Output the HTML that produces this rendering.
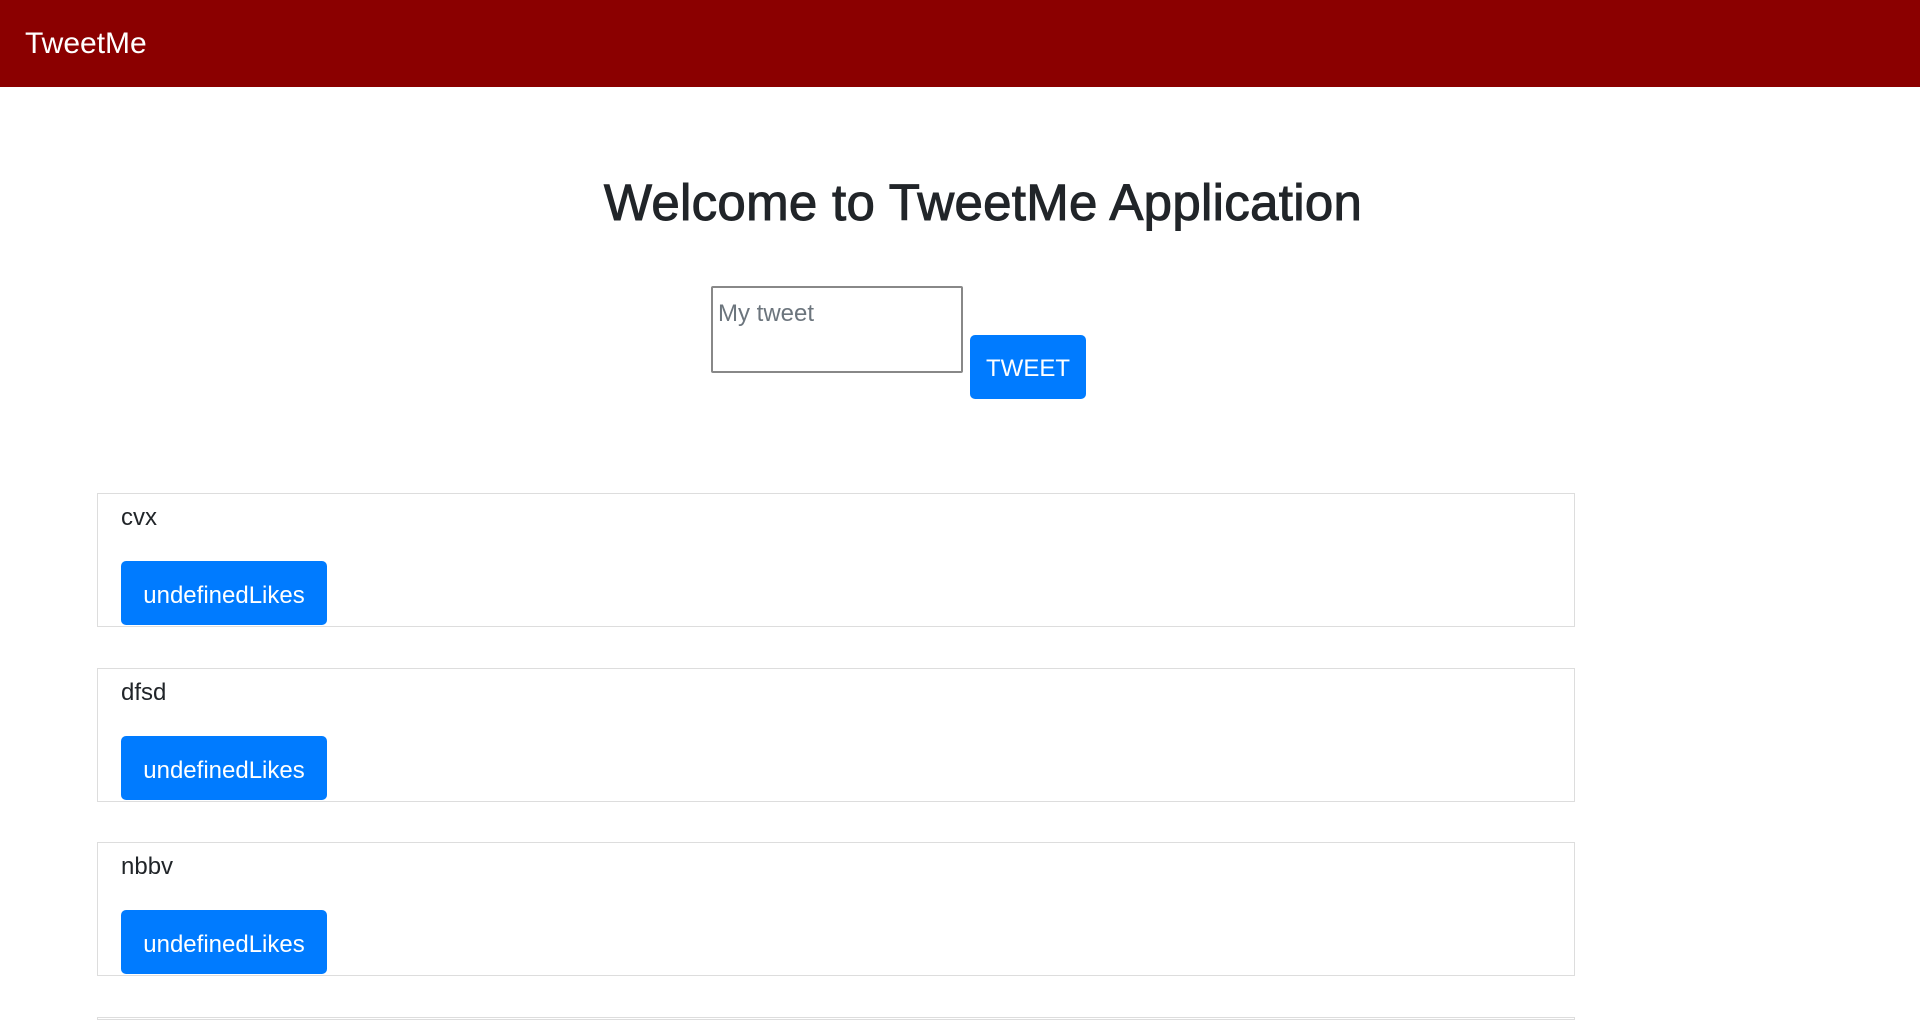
<!DOCTYPE html>
<html style="width:1920px;height:1020px;overflow:hidden"><head><meta charset="utf-8"><style>
*{box-sizing:border-box;margin:0;padding:0}
body{width:1920px;height:1020px;overflow:hidden;background:#fff;font-family:"Liberation Sans",sans-serif;color:#212529;position:relative}
.nav{position:absolute;left:0;top:0;width:1920px;height:87px;background:#8b0000}
.brand{position:absolute;left:25px;top:27px;font-size:30px;color:#fff}
h1{position:absolute;left:0;width:1966px;text-align:center;top:173px;font-size:51px;font-weight:normal;color:#212529;-webkit-text-stroke:1px #212529;letter-spacing:0.3px}
.ta{position:absolute;left:711px;top:286px;width:252px;height:87px;border:2px solid #888;border-radius:2px}
.ta span{position:absolute;left:5px;top:12px;font-size:24px;color:#6c757d}
.btn{position:absolute;background:#007bff;color:#fff;border-radius:5px;font-size:24px;text-align:center}
.card{position:absolute;left:97px;width:1478px;height:134px;border:1px solid #ddd}
.card .t{position:absolute;left:23px;top:10px;font-size:24px}
.card .btn{left:23px;top:67px;width:206px;height:64px;line-height:70px}
</style></head><body>
<div class="nav"><div class="brand">TweetMe</div></div>
<h1>Welcome to TweetMe Application</h1>
<div class="ta"><span>My tweet</span></div>
<div class="btn" style="left:970px;top:335px;width:116px;height:64px;line-height:68px">TWEET</div>
<div class="card" style="top:493px"><div class="t">cvx</div><div class="btn">undefinedLikes</div></div>
<div class="card" style="top:668px"><div class="t">dfsd</div><div class="btn">undefinedLikes</div></div>
<div class="card" style="top:842px"><div class="t">nbbv</div><div class="btn">undefinedLikes</div></div>
<div class="card" style="top:1017px;height:3px"></div>
</body></html>
